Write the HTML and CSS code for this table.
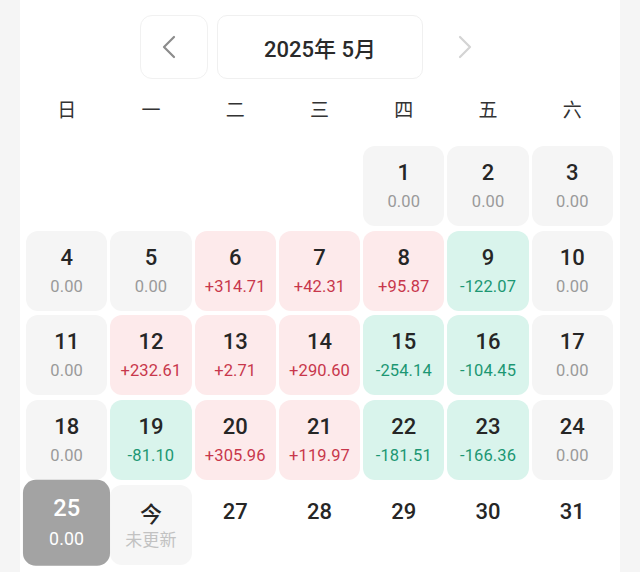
FILE: index.html
```html
<!DOCTYPE html>
<html lang="zh">
<head>
<meta charset="utf-8">
<link rel="stylesheet" href="styles.css">
</head>
<body>
<div class="panel">
  <div class="nav">
    <div class="nav-btn prev">
      <svg width="16" height="24" viewBox="0 0 16 24"><path d="M13 2 L3 12 L13 22" fill="none" stroke="#8c8c8c" stroke-width="2.2" stroke-linecap="round" stroke-linejoin="round"/></svg>
    </div>
    <div class="nav-title">2025年 5月</div>
    <div class="nav-btn next">
      <svg width="16" height="24" viewBox="0 0 16 24"><path d="M3 2 L13 12 L3 22" fill="none" stroke="#d4d4d4" stroke-width="2.2" stroke-linecap="round" stroke-linejoin="round"/></svg>
    </div>
  </div>
  <div class="week">
    <span>日</span><span>一</span><span>二</span><span>三</span><span>四</span><span>五</span><span>六</span>
  </div>
  <div class="grid">
    <div class="cell empty"></div><div class="cell empty"></div><div class="cell empty"></div><div class="cell empty"></div>
    <div class="cell zero"><div class="d">1</div><div class="v">0.00</div></div>
    <div class="cell zero"><div class="d">2</div><div class="v">0.00</div></div>
    <div class="cell zero"><div class="d">3</div><div class="v">0.00</div></div>

    <div class="cell zero"><div class="d">4</div><div class="v">0.00</div></div>
    <div class="cell zero"><div class="d">5</div><div class="v">0.00</div></div>
    <div class="cell up"><div class="d">6</div><div class="v">+314.71</div></div>
    <div class="cell up"><div class="d">7</div><div class="v">+42.31</div></div>
    <div class="cell up"><div class="d">8</div><div class="v">+95.87</div></div>
    <div class="cell down"><div class="d">9</div><div class="v">-122.07</div></div>
    <div class="cell zero"><div class="d">10</div><div class="v">0.00</div></div>

    <div class="cell zero"><div class="d">11</div><div class="v">0.00</div></div>
    <div class="cell up"><div class="d">12</div><div class="v">+232.61</div></div>
    <div class="cell up"><div class="d">13</div><div class="v">+2.71</div></div>
    <div class="cell up"><div class="d">14</div><div class="v">+290.60</div></div>
    <div class="cell down"><div class="d">15</div><div class="v">-254.14</div></div>
    <div class="cell down"><div class="d">16</div><div class="v">-104.45</div></div>
    <div class="cell zero"><div class="d">17</div><div class="v">0.00</div></div>

    <div class="cell zero"><div class="d">18</div><div class="v">0.00</div></div>
    <div class="cell down"><div class="d">19</div><div class="v">-81.10</div></div>
    <div class="cell up"><div class="d">20</div><div class="v">+305.96</div></div>
    <div class="cell up"><div class="d">21</div><div class="v">+119.97</div></div>
    <div class="cell down"><div class="d">22</div><div class="v">-181.51</div></div>
    <div class="cell down"><div class="d">23</div><div class="v">-166.36</div></div>
    <div class="cell zero"><div class="d">24</div><div class="v">0.00</div></div>

    <div class="cell selected"><div class="d">25</div><div class="v">0.00</div></div>
    <div class="cell today"><div class="d cjk">今</div><div class="v cjk">未更新</div></div>
    <div class="cell future"><div class="d">27</div></div>
    <div class="cell future"><div class="d">28</div></div>
    <div class="cell future"><div class="d">29</div></div>
    <div class="cell future"><div class="d">30</div></div>
    <div class="cell future"><div class="d">31</div></div>
  </div>
</div>
</body>
</html>
```
FILE: styles.css
```css
* { box-sizing: border-box; }
html, body { margin: 0; padding: 0; }
body {
  background: #f5f5f5;
  font-family: Roboto, "Noto Sans CJK SC", sans-serif;
  color: #222;
  width: 640px;
  height: 572px;
  overflow: hidden;
}
.panel {
  margin: 0 20px;
  width: 600px;
  height: 572px;
  background: #fff;
  padding-top: 15px;
}
.nav {
  display: flex;
  justify-content: center;
  gap: 9px;
  height: 64px;
}
.nav-btn {
  width: 68px;
  height: 64px;
  display: flex;
  align-items: center;
  justify-content: center;
}
.nav-btn.prev {
  border: 1px solid #f1f1f1;
  border-radius: 12px;
  padding-right: 10px;
}
.nav-btn.next {
  padding-right: 2px;
}
.nav-title {
  width: 206px;
  height: 64px;
  border: 1px solid #f0f0f0;
  border-radius: 10px;
  display: flex;
  align-items: center;
  justify-content: center;
  font-size: 22px;
  font-weight: 500;
  color: #2a2a2a;
  font-family: Roboto, "Noto Sans CJK SC", sans-serif;
}
.week {
  margin-top: 11px;
  padding: 0 7px 0 6px;
  display: grid;
  grid-template-columns: repeat(7, 1fr);
  column-gap: 3px;
  height: 36px;
  align-items: center;
  font-family: "Noto Sans CJK SC", sans-serif;
  font-size: 19px;
  color: #333;
  text-align: center;
}
.grid {
  margin-top: 20px;
  padding: 0 7px 0 6px;
  display: grid;
  grid-template-columns: repeat(7, 1fr);
  grid-auto-rows: 80px;
  column-gap: 3px;
  row-gap: 4.7px;
}
.cell {
  border-radius: 12px;
  display: flex;
  flex-direction: column;
  align-items: center;
  padding-top: 15px;
}
.cell .d {
  font-size: 22px;
  line-height: 24px;
  font-weight: 500;
  color: #262626;
}
.cell .v {
  margin-top: 7px;
  font-size: 16.5px;
  line-height: 20px;
  letter-spacing: 0.1px;
}
.zero { background: #f5f5f5; }
.zero .v { color: #9a9a9a; }
.up { background: #fdeaeb; }
.up .v { color: #c8374b; }
.down { background: #d9f4ec; }
.down .v { color: #1c9773; }
.selected {
  background: #a3a3a3;
  transform: scale(1.075) translateY(-2px);
}
.selected .d, .selected .v { color: #fff; }
.today { background: #f6f6f6; }
.today .cjk { font-family: "Noto Sans CJK SC", sans-serif; }
.today .d { font-weight: 500; }
.today .v { color: #c2c2c2; font-size: 17px; margin-top: 5px; }
```
